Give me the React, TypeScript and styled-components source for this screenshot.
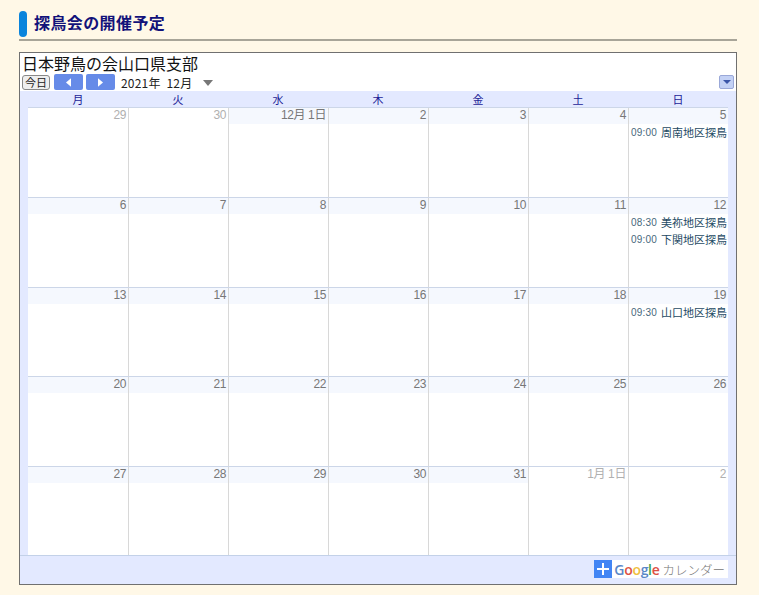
import * as React from 'react'
import styled, { createGlobalStyle } from 'styled-components'

const weekdays = ['月', '火', '水', '木', '金', '土', '日']

interface CalEvent {
  time: string
  title: string
}
interface Day {
  label: string
  muted?: boolean
  events?: CalEvent[]
}

const weeks: Day[][] = [
  [
    { label: '29', muted: true },
    { label: '30', muted: true },
    { label: '12月 1日' },
    { label: '2' },
    { label: '3' },
    { label: '4' },
    { label: '5', events: [{ time: '09:00', title: '周南地区探鳥' }] },
  ],
  [
    { label: '6' },
    { label: '7' },
    { label: '8' },
    { label: '9' },
    { label: '10' },
    { label: '11' },
    {
      label: '12',
      events: [
        { time: '08:30', title: '美祢地区探鳥' },
        { time: '09:00', title: '下関地区探鳥' },
      ],
    },
  ],
  [
    { label: '13' },
    { label: '14' },
    { label: '15' },
    { label: '16' },
    { label: '17' },
    { label: '18' },
    { label: '19', events: [{ time: '09:30', title: '山口地区探鳥' }] },
  ],
  [
    { label: '20' },
    { label: '21' },
    { label: '22' },
    { label: '23' },
    { label: '24' },
    { label: '25' },
    { label: '26' },
  ],
  [
    { label: '27' },
    { label: '28' },
    { label: '29' },
    { label: '30' },
    { label: '31' },
    { label: '1月 1日', muted: true },
    { label: '2', muted: true },
  ],
]

const weekHeights = [90, 90, 89, 90, 89]

export default function App() {
  return (
    <>
      <GlobalStyle />
      <Page>
        <Heading>探鳥会の開催予定</Heading>
        <Calendar>
          <CalendarTitle>日本野鳥の会山口県支部</CalendarTitle>
          <Toolbar>
            <TodayButton>今日</TodayButton>
            <NavButton>
              <NavArrow viewBox="0 0 6 10">
                <path d="M6 0v10L0 5z" />
              </NavArrow>
            </NavButton>
            <NavButton>
              <NavArrow viewBox="0 0 6 10">
                <path d="M0 0v10l6-5z" />
              </NavArrow>
            </NavButton>
            <DateLabel>2021年  12月</DateLabel>
            <DateCaret />
            <MenuButton>
              <MenuCaret />
            </MenuButton>
          </Toolbar>
          <WeekHeader>
            {weekdays.map((day) => (
              <WeekdayName key={day}>{day}</WeekdayName>
            ))}
          </WeekHeader>
          <MonthGrid>
            {weeks.map((week, index) => (
              <WeekRow key={index} $height={weekHeights[index]}>
                {week.map((day, dayIndex) => (
                  <DayCell key={dayIndex}>
                    <DayNumber $muted={day.muted}>{day.label}</DayNumber>
                    {day.events &&
                      day.events.map((event) => (
                        <EventRow key={event.time}>
                          <EventTime>{event.time}</EventTime>
                          <EventTitle>{event.title}</EventTitle>
                        </EventRow>
                      ))}
                  </DayCell>
                ))}
              </WeekRow>
            ))}
          </MonthGrid>
          <Footer>
            <GoogleBadge>
              <PlusBox>
                <svg width="12" height="12" viewBox="0 0 12 12">
                  <path d="M5 0h2v5h5v2H7v5H5V7H0V5h5z" fill="#fff" />
                </svg>
              </PlusBox>
              <GoogleWord>
                <span style={{ color: '#5a87c8' }}>G</span>
                <span style={{ color: '#dd5044' }}>o</span>
                <span style={{ color: '#f0c040' }}>o</span>
                <span style={{ color: '#5a87c8' }}>g</span>
                <span style={{ color: '#3fa556' }}>l</span>
                <span style={{ color: '#dd5044' }}>e</span>
              </GoogleWord>
              <BadgeText>カレンダー</BadgeText>
            </GoogleBadge>
          </Footer>
        </Calendar>
      </Page>
    </>
  )
}

const GlobalStyle = createGlobalStyle`
  html, body {
    margin: 0;
    padding: 0;
    background: #fff8e7;
    font-family: "Noto Sans CJK JP", "Liberation Sans", sans-serif;
  }
`

const Page = styled.div`
  width: 759px;
  height: 595px;
  padding: 11px 22px 0 19px;
  box-sizing: border-box;
  overflow: hidden;
`

const Heading = styled.h2`
  position: relative;
  margin: 0 0 11px;
  height: 30px;
  padding-left: 15px;
  box-sizing: border-box;
  border-bottom: 2px solid #a8a598;
  font-size: 16px;
  font-weight: 700;
  letter-spacing: 0.4px;
  line-height: 23px;
  color: #12127a;

  &:before {
    content: '';
    position: absolute;
    left: 0;
    top: 0;
    width: 8px;
    height: 26px;
    border-radius: 4px;
    background: #0a84dc;
  }
`

const Calendar = styled.div`
  height: 533px;
  box-sizing: border-box;
  border: 1px solid #707070;
  background: #fff;
  display: flex;
  flex-direction: column;
`

const CalendarTitle = styled.div`
  height: 18px;
  padding: 1px 0 0 2px;
  font-size: 16px;
  line-height: 18px;
  color: #111;
`

const Toolbar = styled.div`
  height: 20px;
  padding: 1px 2px 0 2px;
  box-sizing: border-box;
  display: flex;
  align-items: center;
  font-size: 12px;
`

const TodayButton = styled.div`
  width: 28px;
  height: 15px;
  box-sizing: border-box;
  border: 1px solid #888;
  border-radius: 3px;
  background: #eee;
  font-size: 11px;
  line-height: 13px;
  text-align: center;
  color: #222;
  margin-right: 4px;
`

const NavButton = styled.div`
  width: 29px;
  height: 16px;
  margin-right: 3px;
  border-radius: 2px;
  background: #668be8;
  display: flex;
  align-items: center;
  justify-content: center;
`

const NavArrow = styled.svg`
  width: 5px;
  height: 9px;
  fill: #fff;
`

const DateLabel = styled.div`
  margin-left: 3px;
  font-size: 12px;
  letter-spacing: 0.2px;
  color: #222;
  white-space: pre;
`

const DateCaret = styled.div`
  margin: 1px 0 0 11px;
  border-left: 5px solid transparent;
  border-right: 5px solid transparent;
  border-top: 6px solid #777;
`

const MenuButton = styled.div`
  margin-left: auto;
  width: 15px;
  height: 14px;
  box-sizing: border-box;
  border: 1px solid #9aa8d8;
  border-radius: 2px;
  background: #c3d1f5;
  display: flex;
  align-items: center;
  justify-content: center;
`

const MenuCaret = styled.div`
  border-left: 4px solid transparent;
  border-right: 4px solid transparent;
  border-top: 4px solid #3a55a8;
`

const WeekHeader = styled.div`
  height: 16px;
  padding: 0 8px;
  background: #e3e9ff;
  display: grid;
  grid-template-columns: repeat(7, 100px);
`

const WeekdayName = styled.div`
  font-size: 11px;
  line-height: 17px;
  text-align: center;
  color: #1c1c96;
`

const MonthGrid = styled.div`
  flex: 1;
  padding: 0 8px;
  background: #e3e9ff;
  display: flex;
  flex-direction: column;
`

const WeekRow = styled.div<{ $height: number }>`
  height: ${(p) => p.$height}px;
  box-sizing: border-box;
  display: grid;
  grid-template-columns: repeat(7, 100px);
  border-top: 1px solid #ccd6e8;
  background: #fff;
`

const DayCell = styled.div`
  border-left: 1px solid #d8d8d8;
  min-width: 0;
  overflow: hidden;

  &:first-child {
    border-left: 0;
  }
`

const DayNumber = styled.div<{ $muted?: boolean }>`
  height: 16px;
  padding-right: 2px;
  font-family: "Liberation Sans", "Noto Sans CJK JP", sans-serif;
  font-size: 12px;
  letter-spacing: -0.4px;
  line-height: 15px;
  text-align: right;
  white-space: pre;
  color: ${(p) => (p.$muted ? '#b0b0b0' : '#777')};
  background: ${(p) => (p.$muted ? '#fff' : '#f5f8fe')};
`

const EventRow = styled.div`
  height: 17px;
  padding-left: 2px;
  display: flex;
  font-size: 11px;
  line-height: 17px;
  white-space: nowrap;
  color: #1d4a63;
`

const EventTime = styled.span`
  width: 30px;
  font-family: "Liberation Sans", sans-serif;
  font-size: 10px;
  letter-spacing: 0.2px;
  color: #47687c;
`

const EventTitle = styled.span`
  font-size: 11px;
`

const Footer = styled.div`
  height: 29px;
  flex-shrink: 0;
  border-top: 1px solid #c3d1e8;
  background: #e3e9ff;
  display: flex;
  justify-content: flex-end;
  padding: 4px 8px 0 0;
  box-sizing: border-box;
`

const GoogleBadge = styled.div`
  height: 18px;
  display: flex;
  align-items: center;
  background: #fff;
  padding-right: 3px;
`

const PlusBox = styled.div`
  width: 18px;
  height: 18px;
  background: #4285f4;
  display: flex;
  align-items: center;
  justify-content: center;
`

const GoogleWord = styled.span`
  margin-left: 2px;
  font-family: "Open Sans", sans-serif;
  font-size: 14px;
  font-weight: 600;
  letter-spacing: -0.3px;
`

const BadgeText = styled.span`
  margin-left: 3px;
  font-size: 12.5px;
  font-weight: 300;
  color: #777;
`
